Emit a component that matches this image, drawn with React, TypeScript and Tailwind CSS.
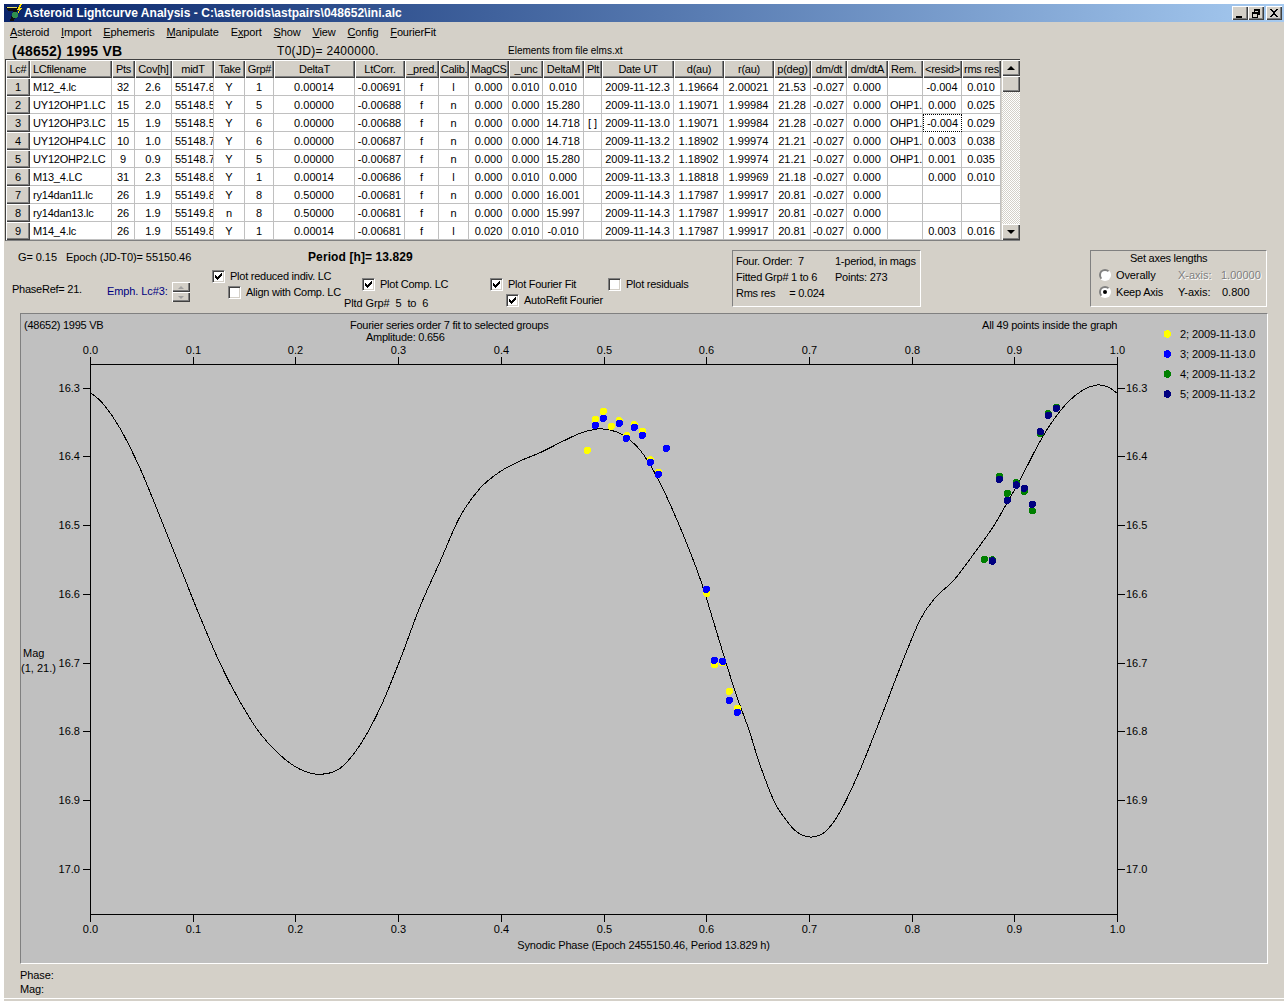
import * as React from 'react';

const BEVEL = 'shadow-[inset_1px_1px_0_#ffffff,inset_-1px_-1px_0_#404040,inset_-2px_-2px_0_#808080]';

const COLS = [
  'w-[24px]', 'w-[82px]', 'w-[23px]', 'w-[37px]', 'w-[42px]', 'w-[31px]', 'w-[29px]', 'w-[81px]',
  'w-[50px]', 'w-[34px]', 'w-[30px]', 'w-[40px]', 'w-[34px]', 'w-[41px]', 'w-[18px]', 'w-[72px]',
  'w-[50px]', 'w-[50px]', 'w-[37px]', 'w-[36px]', 'w-[41px]', 'w-[35px]', 'w-[39px]', 'w-[39px]',
];

const HEADERS = [
  'Lc#', 'LCfilename', 'Pts', 'Cov[h]', 'midT', 'Take', 'Grp#', 'DeltaT', 'LtCorr.', '_pred.', 'Calib.', 'MagCS',
  '_unc', 'DeltaM', 'Plt', 'Date UT', 'd(au)', 'r(au)', 'p(deg)', 'dm/dt', 'dm/dtA', 'Rem.', '<resid>', 'rms res',
];

const ROWS = [
  ['1', 'M12_4.lc', '32', '2.6', '55147.8', 'Y', '1', '0.00014', '-0.00691', 'f', 'l', '0.000', '0.010', '0.010', '', '2009-11-12.3', '1.19664', '2.00021', '21.53', '-0.027', '0.000', '', '-0.004', '0.010'],
  ['2', 'UY12OHP1.LC', '15', '2.0', '55148.5', 'Y', '5', '0.00000', '-0.00688', 'f', 'n', '0.000', '0.000', '15.280', '', '2009-11-13.0', '1.19071', '1.99984', '21.28', '-0.027', '0.000', 'OHP1.', '0.000', '0.025'],
  ['3', 'UY12OHP3.LC', '15', '1.9', '55148.5', 'Y', '6', '0.00000', '-0.00688', 'f', 'n', '0.000', '0.000', '14.718', '[ ]', '2009-11-13.0', '1.19071', '1.99984', '21.28', '-0.027', '0.000', 'OHP1.', '-0.004', '0.029'],
  ['4', 'UY12OHP4.LC', '10', '1.0', '55148.7', 'Y', '6', '0.00000', '-0.00687', 'f', 'n', '0.000', '0.000', '14.718', '', '2009-11-13.2', '1.18902', '1.99974', '21.21', '-0.027', '0.000', 'OHP1.', '0.003', '0.038'],
  ['5', 'UY12OHP2.LC', '9', '0.9', '55148.7', 'Y', '5', '0.00000', '-0.00687', 'f', 'n', '0.000', '0.000', '15.280', '', '2009-11-13.2', '1.18902', '1.99974', '21.21', '-0.027', '0.000', 'OHP1.', '0.001', '0.035'],
  ['6', 'M13_4.LC', '31', '2.3', '55148.8', 'Y', '1', '0.00014', '-0.00686', 'f', 'l', '0.000', '0.010', '0.000', '', '2009-11-13.3', '1.18818', '1.99969', '21.18', '-0.027', '0.000', '', '0.000', '0.010'],
  ['7', 'ry14dan11.lc', '26', '1.9', '55149.8', 'Y', '8', '0.50000', '-0.00681', 'f', 'n', '0.000', '0.000', '16.001', '', '2009-11-14.3', '1.17987', '1.99917', '20.81', '-0.027', '0.000', '', '', ''],
  ['8', 'ry14dan13.lc', '26', '1.9', '55149.8', 'n', '8', '0.50000', '-0.00681', 'f', 'n', '0.000', '0.000', '15.997', '', '2009-11-14.3', '1.17987', '1.99917', '20.81', '-0.027', '0.000', '', '', ''],
  ['9', 'M14_4.lc', '26', '1.9', '55149.8', 'Y', '1', '0.00014', '-0.00681', 'f', 'l', '0.020', '0.010', '-0.010', '', '2009-11-14.3', '1.17987', '1.99917', '20.81', '-0.027', '0.000', '', '0.003', '0.016'],
];

const CURVE: [number, number][] = [
  [90.7, 392.7], [103.3, 404], [120, 428.3], [140, 468.3], [160, 516.7], [180, 566.7], [200, 616.7], [220, 663.3],
  [240, 701.7], [260, 733.3], [280, 755], [300, 769.3], [320, 774.3], [340, 768.3], [360, 745], [380, 708.3],
  [400, 660], [420, 606.7], [440, 561.7], [460, 516.7], [480, 488.3], [500, 471.7], [520, 461], [540, 452.7],
  [560, 442.7], [580, 433.3], [597, 429], [610, 430], [623, 435], [640, 450], [657, 477], [677, 520], [697, 570],
  [707, 600], [723, 653], [737, 697], [749, 730], [760, 765], [775, 803], [790, 825], [800, 834], [812, 837],
  [825, 832], [840, 812], [860, 770], [880, 720], [900, 668], [920, 620], [935, 598], [954, 580], [973, 555],
  [993, 527], [1007, 503], [1020, 480], [1037, 447], [1050, 425], [1067, 403], [1083, 390], [1097, 385],
  [1108, 387], [1117, 393],
];

const YELLOW = [[587.3, 450.3], [595.3, 419.3], [603.3, 411.3], [611.3, 426.3], [619.3, 420.7], [634.3, 424.7], [642.3, 431.3], [626.7, 435.7], [650.3, 460], [658.3, 472.3], [706.7, 593.3], [714.3, 664.7], [722.7, 662.7], [729.3, 691.3], [737.7, 708.3]];
const BLUE = [[595.3, 425.3], [603.3, 418.3], [619.3, 423.3], [634.3, 427.3], [642.3, 435.3], [626.3, 438.3], [650.3, 462.3], [658.3, 474.3], [666.3, 448.3], [706.3, 589.3], [714.3, 660.3], [722.7, 661.3], [729.3, 700.3], [737.3, 712.3]];
const GREEN = [[1056.3, 407.3], [1048.3, 413.7], [1040.3, 433.3], [999.3, 476.3], [1016.3, 482.7], [1024.3, 491.3], [1007.3, 493.3], [1032.3, 510.7], [984.3, 559.3], [992.3, 560]];
const NAVY = [[1056.3, 408.3], [1048.3, 415.3], [1040.3, 431.7], [999.3, 479.3], [1016.3, 485], [1024.3, 488.3], [1007.3, 500.3], [1032.3, 504.3], [992.3, 561]];

const LEGEND = [
  ['#ffff00', '2; 2009-11-13.0', 334],
  ['#0000ff', '3; 2009-11-13.0', 354],
  ['#008000', '4; 2009-11-13.2', 374],
  ['#000080', '5; 2009-11-13.2', 394],
] as const;

const X_TICKS = ['0.0', '0.1', '0.2', '0.3', '0.4', '0.5', '0.6', '0.7', '0.8', '0.9', '1.0'];
const Y_TICKS = ['16.3', '16.4', '16.5', '16.6', '16.7', '16.8', '16.9', '17.0'];
const Y_ROWS = [388, 456, 525, 594, 663, 731, 800, 869];

function smooth(pts: [number, number][]) {
  let d = `M${pts[0][0]} ${pts[0][1]}`;
  for (let i = 0; i < pts.length - 1; i++) {
    const p0 = pts[Math.max(i - 1, 0)];
    const p1 = pts[i];
    const p2 = pts[i + 1];
    const p3 = pts[Math.min(i + 2, pts.length - 1)];
    d += `C${p1[0] + (p2[0] - p0[0]) / 6} ${p1[1] + (p2[1] - p0[1]) / 6} ${p2[0] - (p3[0] - p1[0]) / 6} ${p2[1] - (p3[1] - p1[1]) / 6} ${p2[0]} ${p2[1]}`;
  }
  return d;
}

function Check({ on, label, className }: { on: boolean; label: string; className: string }) {
  return (
    <div className={`flex items-center h-[14px] ${className}`}>
      <span className="shrink-0 w-[13px] h-[13px] bg-white border border-t-[#808080] border-l-[#808080] border-r-white border-b-white shadow-[inset_1px_1px_0_#404040,inset_-1px_-1px_0_#d4d0c8] flex items-center justify-center">
        {on && (
          <svg width="7" height="7" viewBox="0 0 7 7" shapeRendering="crispEdges">
            <path d="M6 0h1v1h-1zM5 1h2v1h-2zM0 2h1v1h-1zM4 2h3v1h-3zM0 3h2v1h-2zM3 3h3v1h-3zM0 4h5v1h-5zM1 5h3v1h-3zM2 6h1v1h-1z" fill="#000" />
          </svg>
        )}
      </span>
      <span className="ml-[5px] whitespace-nowrap tracking-[-0.25px]">{label}</span>
    </div>
  );
}

function Radio({ on }: { on: boolean }) {
  return (
    <span className="shrink-0 w-[12px] h-[12px] rounded-full bg-white border-2 border-t-[#808080] border-l-[#808080] border-r-white border-b-white flex items-center justify-center">
      {on && <span className="w-[4px] h-[4px] rounded-full bg-black" />}
    </span>
  );
}

function Arrow({ up, color = 'border-black', size = 'big' }: { up: boolean; color?: string; size?: string }) {
  const w = size === 'big' ? 'border-x-[4px]' : 'border-x-[3px]';
  const h = up
    ? size === 'big' ? 'border-b-[4px]' : 'border-b-[3px]'
    : size === 'big' ? 'border-t-[4px]' : 'border-t-[3px]';
  return <span className={`w-0 h-0 border-x-transparent border-solid ${w} ${h} ${color}`} />;
}

function TitleButton({ children }: { children: React.ReactNode }) {
  return (
    <div className={`w-[16px] h-[14px] bg-[#d4d0c8] flex items-center justify-center ${BEVEL}`}>
      <svg width="10" height="9" viewBox="0 0 10 9" shapeRendering="crispEdges">{children}</svg>
    </div>
  );
}

function Dots({ pts, fill }: { pts: number[][]; fill: string }) {
  return (
    <>
      {pts.map((p, i) => (
        <circle key={i} cx={p[0]} cy={p[1]} r="3.7" fill={fill} />
      ))}
    </>
  );
}

function Chart() {
  const xs = X_TICKS.map((_, i) => Math.round(90 + i * 102.7) + 0.5);
  const ys = Y_ROWS.map((y) => y + 0.5);
  return (
    <svg width="1246" height="649" viewBox="21 314 1246 649" className="block" fill="#000">
      <text x="24" y="329" className="tracking-[-0.25px]">(48652) 1995 VB</text>
      <text x="350" y="329" className="tracking-[-0.25px]">Fourier series order 7 fit to selected groups</text>
      <text x="366" y="341" className="tracking-[-0.25px]">Amplitude: 0.656</text>
      <text x="982" y="329" className="tracking-[-0.2px]">All 49 points inside the graph</text>
      <text x="23" y="657">Mag</text>
      <text x="21" y="672">(1, 21.)</text>
      <text x="643.5" y="949" textAnchor="middle" className="tracking-[-0.15px]">Synodic Phase (Epoch 2455150.46, Period 13.829 h)</text>
      {X_TICKS.map((t, i) => (
        <g key={t}>
          <text x={xs[i]} y="354" textAnchor="middle">{t}</text>
          <text x={xs[i]} y="933" textAnchor="middle">{t}</text>
        </g>
      ))}
      {Y_TICKS.map((t, i) => (
        <g key={t}>
          <text x="80" y={ys[i] + 3.5} textAnchor="end">{t}</text>
          <text x="1126" y={ys[i] + 3.5}>{t}</text>
        </g>
      ))}
      <g shapeRendering="crispEdges" stroke="#000" strokeWidth="1" fill="none">
        <path d="M90.5 364.5H1117.5V914.5H90.5Z" />
        {xs.map((x) => (
          <path key={x} d={`M${x} 357V364M${x} 915V922`} />
        ))}
        {ys.map((y) => (
          <path key={y} d={`M83 ${y}H90M1118 ${y}H1125`} />
        ))}
        <path d={smooth(CURVE)} />
      </g>
      <g shapeRendering="crispEdges">
        <Dots pts={YELLOW} fill="#ffff00" />
        <Dots pts={BLUE} fill="#0000ff" />
        <Dots pts={GREEN} fill="#008000" />
        <Dots pts={NAVY} fill="#000080" />
        {LEGEND.map(([c, , y]) => (
          <circle key={y} cx="1167.3" cy={y} r="3.7" fill={c} />
        ))}
      </g>
      {LEGEND.map(([, t, y]) => (
        <text key={y} x="1180" y={y + 4} className="tracking-[-0.1px]">{t}</text>
      ))}
    </svg>
  );
}

function Grid() {
  return (
    <div className="ml-px flex w-[1015px] h-[182px] border-t border-l border-t-[#404040] border-l-[#404040] border-b border-b-[#808080]">
      <table className="table-fixed border-separate border-spacing-0 w-[995px] h-[180px] bg-white">
        <colgroup>
          {COLS.map((c, i) => (
            <col key={i} className={c} />
          ))}
        </colgroup>
        <thead>
          <tr>
            {HEADERS.map((h, i) => (
              <th
                key={h}
                className={`h-[18px] p-0 font-normal bg-[#d4d0c8] overflow-hidden whitespace-nowrap tracking-[-0.25px] ${i === 1 || i === 21 ? 'text-left pl-[3px]' : 'text-center'} ${BEVEL}`}
              >
                {h}
              </th>
            ))}
          </tr>
        </thead>
        <tbody>
          {ROWS.map((row, r) =>
            <tr key={r}>
              {row.map((v, c) => {
                if (c === 0) {
                  return <td key={c} className={`h-[18px] p-0 bg-[#d4d0c8] text-center ${BEVEL}`}>{v}</td>;
                }
                const left = c === 1 || c === 4;
                const focus = r === 2 && c === 22;
                return (
                  <td
                    key={c}
                    className={`h-[18px] p-0 overflow-hidden whitespace-nowrap border-r border-b ${left ? 'text-left pl-[3px]' : c === 21 ? 'text-left pl-[2px] tracking-[-0.2px]' : 'text-center'} ${c === 1 ? 'tracking-[-0.2px]' : ''} ${focus ? 'border border-dotted border-black' : 'border-[#c0c0c0]'}`}
                  >
                    {v}
                  </td>
                );
              })}
            </tr>
          )}
        </tbody>
      </table>
      <div className="w-[18px] ml-px flex flex-col bg-[repeating-conic-gradient(#ffffff_0_25%,#d4d0c8_0_50%)] bg-[length:2px_2px]">
        <div className={`h-[16px] bg-[#d4d0c8] flex items-center justify-center ${BEVEL}`}><Arrow up /></div>
        <div className={`h-[16px] bg-[#d4d0c8] ${BEVEL}`} />
        <div className="flex-1" />
        <div className={`h-[16px] bg-[#d4d0c8] flex items-center justify-center ${BEVEL}`}><Arrow up={false} /></div>
      </div>
    </div>
  );
}

function Controls() {
  return (
    <div className="flex h-[72px]">
      <div className="w-[204px]">
        <div className="mt-[9px] h-[14px] pl-[14px] whitespace-nowrap tracking-[-0.07px]">G= 0.15&nbsp;&nbsp;&nbsp;Epoch (JD-T0)= 55150.46</div>
        <div className="mt-[18px] flex pl-[8px]">
          <div className="w-[95px] h-[14px] tracking-[-0.25px]">PhaseRef= 21.</div>
          <div className="mt-[2px] w-[65px] text-[#000080] h-[14px] whitespace-nowrap tracking-[-0.1px]">Emph. Lc#3:</div>
          <div className="w-[18px] h-[20px] flex flex-col">
            <div className={`h-[10px] bg-[#d4d0c8] flex items-center justify-center ${BEVEL}`}><Arrow up color="border-[#a0a0a0]" size="small" /></div>
            <div className={`h-[10px] bg-[#d4d0c8] flex items-center justify-center ${BEVEL}`}><Arrow up={false} color="border-[#a0a0a0]" size="small" /></div>
          </div>
        </div>
      </div>
      <div className="w-[524px]">
        <div className="mt-[9px] h-[14px] pl-[100px] font-bold text-[12px] leading-[14px] tracking-[0.1px]">Period [h]= 13.829</div>
        <div className="flex mt-[5px]">
          <div className="w-[132px]">
            <Check on label="Plot reduced indiv. LC" className="ml-[4px]" />
            <Check on={false} label="Align with Comp. LC" className="ml-[20px] mt-[2px]" />
          </div>
          <div className="w-[146px] pt-[8px]">
            <Check on label="Plot Comp. LC" className="ml-[22px]" />
            <div className="ml-[4px] mt-[5px] h-[14px] whitespace-pre tracking-[-0.1px]">Pltd Grp#  5  to  6</div>
          </div>
          <div className="w-[116px] pt-[8px]">
            <Check on label="Plot Fourier Fit" className="ml-[4px]" />
            <Check on label="AutoRefit Fourier" className="ml-[20px] mt-[2px]" />
          </div>
          <div className="pt-[8px]">
            <Check on={false} label="Plot residuals" className="ml-[6px]" />
          </div>
        </div>
      </div>
      <div className="mt-[9px] w-[189px] h-[57px] border border-t-[#808080] border-l-[#808080] border-r-white border-b-white pt-[2px] pl-[3px] leading-[16px] tracking-[-0.25px]">
        <div className="flex"><span className="w-[99px]">Four. Order:&nbsp;&nbsp;7</span><span>1-period, in mags</span></div>
        <div className="flex"><span className="w-[99px]">Fitted Grp# 1 to 6</span><span>Points: 273</span></div>
        <div className="whitespace-pre">Rms res     = 0.024</div>
      </div>
      <div className="mt-[9px] ml-[169px] w-[177px] h-[57px] border border-t-[#808080] border-l-[#808080] border-r-white border-b-white">
        <div className="h-[15px] pl-[39px] leading-[14px] tracking-[-0.25px]">Set axes lengths</div>
        <div className="h-[17px] flex items-center pl-[8px]">
          <Radio on={false} />
          <span className="ml-[5px] w-[62px] tracking-[-0.1px]">Overally</span>
          <span className="w-[43px] text-[#808080] [text-shadow:1px_1px_0_#ffffff]">X-axis:</span>
          <span className="text-[#808080] [text-shadow:1px_1px_0_#ffffff]">1.00000</span>
        </div>
        <div className="h-[17px] flex items-center pl-[8px]">
          <Radio on />
          <span className="ml-[5px] w-[62px] tracking-[-0.2px]">Keep Axis</span>
          <span className="w-[44px]">Y-axis:</span>
          <span>0.800</span>
        </div>
      </div>
    </div>
  );
}

export default function App() {
  const menu: [string, string][] = [
    ['', 'Asteroid'], ['', 'Import'], ['', 'Ephemeris'], ['', 'Manipulate'], ['E', 'xport'],
    ['', 'Show'], ['', 'View'], ['', 'Config'], ['', 'FourierFit'],
  ];
  return (
    <div className="w-[1288px] h-[1002px] bg-white pt-1 px-1 overflow-hidden text-[11px] leading-[14px] text-black font-['Liberation_Sans',sans-serif]">
      <div className="h-[995px] bg-[#d4d0c8] border-b border-b-white">
        <div className="h-[18px] flex items-center bg-gradient-to-r from-[#0a246a] to-[#a6caf0] pl-[2px] pr-[2px]">
          <svg width="17" height="18" viewBox="0 0 17 18" shapeRendering="crispEdges" className="shrink-0">
            <path d="M0 3H12L8 17H4L7 7H2L1 5Z" fill="#101010" />
            <path d="M1 3H11V4H1Z" fill="#e8e060" />
            <path d="M14 0L11 6 13 6 11 11 16 4 14 4 16 0Z" fill="#ffe000" />
            <circle cx="9" cy="11" r="3" fill="#2f8f4f" />
          </svg>
          <span className="ml-px text-white font-bold text-[12px] whitespace-nowrap tracking-[0.03px]">Asteroid Lightcurve Analysis - C:\asteroids\astpairs\048652\ini.alc</span>
          <div className="ml-auto flex items-center">
            <TitleButton><path d="M1 7h6v2H1z" fill="#000" /></TitleButton>
            <TitleButton><path d="M3 0h6v6H7V2H4V3H3zM1 3h6v6H1zM2 5v3h4V5z" fill="#000" fillRule="evenodd" /></TitleButton>
            <div className="ml-[2px]">
              <TitleButton><path d="M1 0h2v1h1v1h2V1h1V0h2v1H8v1H7v1H6v2h1v1h1v1h1v1H7V7H6V6H4v1H3v1H1V7h1V6h1V5h1V3H3V2H2V1H1z" fill="#000" /></TitleButton>
            </div>
          </div>
        </div>
        <div className="h-[20px] flex items-center pl-[6px] gap-[12px] tracking-[-0.16px]">
          {menu.map(([pre, rest]) => {
            const head = pre || rest[0];
            const tail = pre ? rest : rest.slice(1);
            return pre ? (
              <span key={rest}>{pre}<span className="underline">{tail[0]}</span>{tail.slice(1)}</span>
            ) : (
              <span key={rest}><span className="underline">{head}</span>{tail}</span>
            );
          })}
        </div>
        <div className="h-[17px] flex items-center">
          <span className="ml-[8px] w-[265px] font-bold text-[14px] tracking-[0.25px]">(48652) 1995 VB</span>
          <span className="w-[231px] text-[12px] tracking-[0.3px]">T0(JD)= 2400000.</span>
          <span className="text-[10px]">Elements from file elms.xt</span>
        </div>
        <Grid />
        <Controls />
        <div className="ml-[16px] w-[1248px] h-[651px] bg-[#c0c0c0] border border-t-[#808080] border-l-[#808080] border-r-white border-b-white">
          <Chart />
        </div>
        <div className="ml-[16px] pt-[4px] tracking-[-0.1px]">
          <div>Phase:</div>
          <div>Mag:</div>
        </div>
      </div>
      <div className="h-[2px] bg-[#d4d0c8]" />
    </div>
  );
}
